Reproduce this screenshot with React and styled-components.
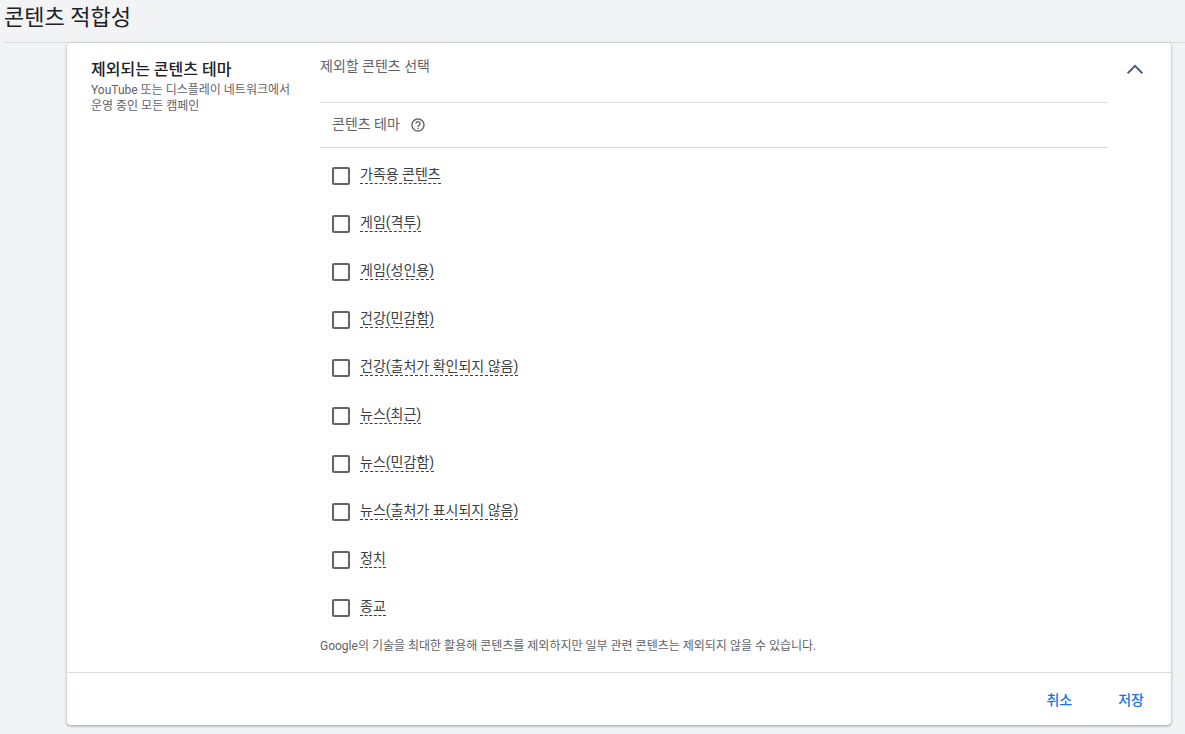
import { useState } from "react";
import styled, { createGlobalStyle } from "styled-components";

const themes = [
    "가족용 콘텐츠",
    "게임(격투)",
    "게임(성인용)",
    "건강(민감함)",
    "건강(출처가 확인되지 않음)",
    "뉴스(최근)",
    "뉴스(민감함)",
    "뉴스(출처가 표시되지 않음)",
    "정치",
    "종교",
];

const App = () => {

    const [ open, setOpen ] = useState(true)
    const [ excluded, setExcluded ] = useState([])

    const toggleTheme = (theme) => {
        setExcluded((prev) =>
            prev.includes(theme) ? prev.filter((item) => item !== theme) : [...prev, theme]
        )
    }

    return (
        <>
            <GlobalStyle />
            <Header>
                <PageTitle>콘텐츠 적합성</PageTitle>
            </Header>
            <Card>
                <CardBody>
                    <Summary>
                        <SummaryTitle>제외되는 콘텐츠 테마</SummaryTitle>
                        <SummaryText>YouTube 또는 디스플레이 네트워크에서 운영 중인 모든 캠페인</SummaryText>
                    </Summary>
                    <Content>
                        <Prompt>제외할 콘텐츠 선택</Prompt>
                        {open && (
                            <>
                                <ListHeader>
                                    <ListTitle>콘텐츠 테마</ListTitle>
                                    <HelpButton type="button" aria-label="도움말">
                                        <svg width="16" height="16" viewBox="0 0 24 24" fill="currentColor">
                                            <path d="M11 18h2v-2h-2v2zm1-16C6.48 2 2 6.48 2 12s4.48 10 10 10 10-4.48 10-10S17.52 2 12 2zm0 18c-4.41 0-8-3.59-8-8s3.59-8 8-8 8 3.59 8 8-3.59 8-8 8zm0-14c-2.21 0-4 1.79-4 4h2c0-1.1.9-2 2-2s2 .9 2 2c0 2-3 1.75-3 5h2c0-2.25 3-2.5 3-5 0-2.21-1.79-4-4-4z" />
                                        </svg>
                                    </HelpButton>
                                </ListHeader>
                                <ThemeList>
                                    {themes.map((theme) => (
                                        <ThemeRow key={theme}>
                                            <ThemeLabel>
                                                <Checkbox
                                                    type="checkbox"
                                                    checked={excluded.includes(theme)}
                                                    onChange={() => toggleTheme(theme)}
                                                />
                                                <ThemeName>{theme}</ThemeName>
                                            </ThemeLabel>
                                        </ThemeRow>
                                    ))}
                                </ThemeList>
                                <Note>Google의 기술을 최대한 활용해 콘텐츠를 제외하지만 일부 관련 콘텐츠는 제외되지 않을 수 있습니다.</Note>
                            </>
                        )}
                    </Content>
                    <ToggleArea>
                        <ToggleButton
                            type="button"
                            aria-label="접기"
                            aria-expanded={open}
                            $open={open}
                            onClick={() => setOpen(!open)}
                        >
                            <svg width="24" height="24" viewBox="0 0 24 24" fill="none" stroke="currentColor" strokeWidth="2">
                                <path d="M4.7 16.2 12 8.9l7.3 7.3" />
                            </svg>
                        </ToggleButton>
                    </ToggleArea>
                </CardBody>
                <Footer>
                    <TextButton type="button" onClick={() => setExcluded([])}>취소</TextButton>
                    <TextButton type="button">저장</TextButton>
                </Footer>
            </Card>
        </>
    );
};

export default App;

const GlobalStyle = createGlobalStyle`
    * {
        box-sizing: border-box;
    }

    body {
        margin: 0;
        background: #f1f3f4;
        color: #3c4043;
        font-family: Roboto, "Noto Sans CJK KR", sans-serif;
        font-size: 14px;
        line-height: 20px;
    }

    button,
    input {
        font: inherit;
    }
`

const Header = styled.header`
    margin-left: 4px;
    padding: 4px 0 10px;
    border-bottom: 1px solid #dadce0;
`

const PageTitle = styled.h1`
    margin: 0;
    color: #202124;
    font-size: 22px;
    font-weight: 400;
    line-height: 28px;
`

const Card = styled.main`
    margin: 0 14px 9px 67px;
    background: #fff;
    border-radius: 4px;
    box-shadow: 0 1px 2px rgba(60, 64, 67, 0.3), 0 1px 3px 1px rgba(60, 64, 67, 0.15);
`

const CardBody = styled.div`
    display: flex;
    padding: 13px 0 18px 24px;
`

const Summary = styled.div`
    flex: 0 0 229px;
    padding: 2px 16px 0 0;
`

const SummaryTitle = styled.h2`
    margin: 0;
    color: #202124;
    font-size: 16px;
    font-weight: 500;
    line-height: 24px;
`

const SummaryText = styled.p`
    margin: 0;
    color: #5f6368;
    font-size: 12px;
    line-height: 16px;
`

const Content = styled.section`
    flex: 1;
    min-width: 0;
`

const Prompt = styled.p`
    margin: 0;
    padding-bottom: 26px;
    color: #5f6368;
`

const ListHeader = styled.div`
    display: flex;
    align-items: center;
    gap: 10px;
    height: 46px;
    padding-left: 12px;
    border-top: 1px solid #dadce0;
    border-bottom: 1px solid #dadce0;
    color: #5f6368;
`

const ListTitle = styled.span`
    padding-bottom: 2px;
`

const HelpButton = styled.button`
    display: flex;
    padding: 0;
    border: 0;
    background: none;
    color: #5f6368;
    cursor: pointer;
`

const ThemeList = styled.ul`
    margin: 0;
    padding: 4px 0 0 12px;
    list-style: none;
`

const ThemeRow = styled.li`
    display: flex;
    align-items: center;
    height: 48px;
`

const ThemeLabel = styled.label`
    display: flex;
    align-items: center;
    gap: 10px;
    cursor: pointer;
`

const Checkbox = styled.input`
    appearance: none;
    width: 18px;
    height: 18px;
    margin: 0;
    border: 2px solid #5f6368;
    border-radius: 2px;
    cursor: pointer;

    &:checked {
        border-color: #1a73e8;
        background: #1a73e8;
    }
`

const ThemeName = styled.span`
    margin-bottom: 4px;
    border-bottom: 1px dashed #3c4043;
    line-height: 18px;
`

const Note = styled.p`
    margin: 0;
    padding-top: 6px;
    color: #5f6368;
    font-size: 12px;
    line-height: 16px;
`

const ToggleArea = styled.div`
    display: flex;
    flex: 0 0 64px;
    align-items: flex-start;
    justify-content: center;
    padding-top: 1px;
`

const ToggleButton = styled.button`
    display: flex;
    margin-right: 8px;
    padding: 0;
    border: 0;
    background: none;
    color: #4a5a78;
    cursor: pointer;
    transform: ${(props) => (props.$open ? "none" : "rotate(180deg)")};
`

const Footer = styled.footer`
    display: flex;
    justify-content: flex-end;
    gap: 16px;
    padding: 11px 12px 9px;
    border-top: 1px solid #dadce0;
`

const TextButton = styled.button`
    height: 32px;
    padding: 0 15px;
    border: 0;
    background: none;
    color: #1a73e8;
    font-weight: 500;
    cursor: pointer;
`
